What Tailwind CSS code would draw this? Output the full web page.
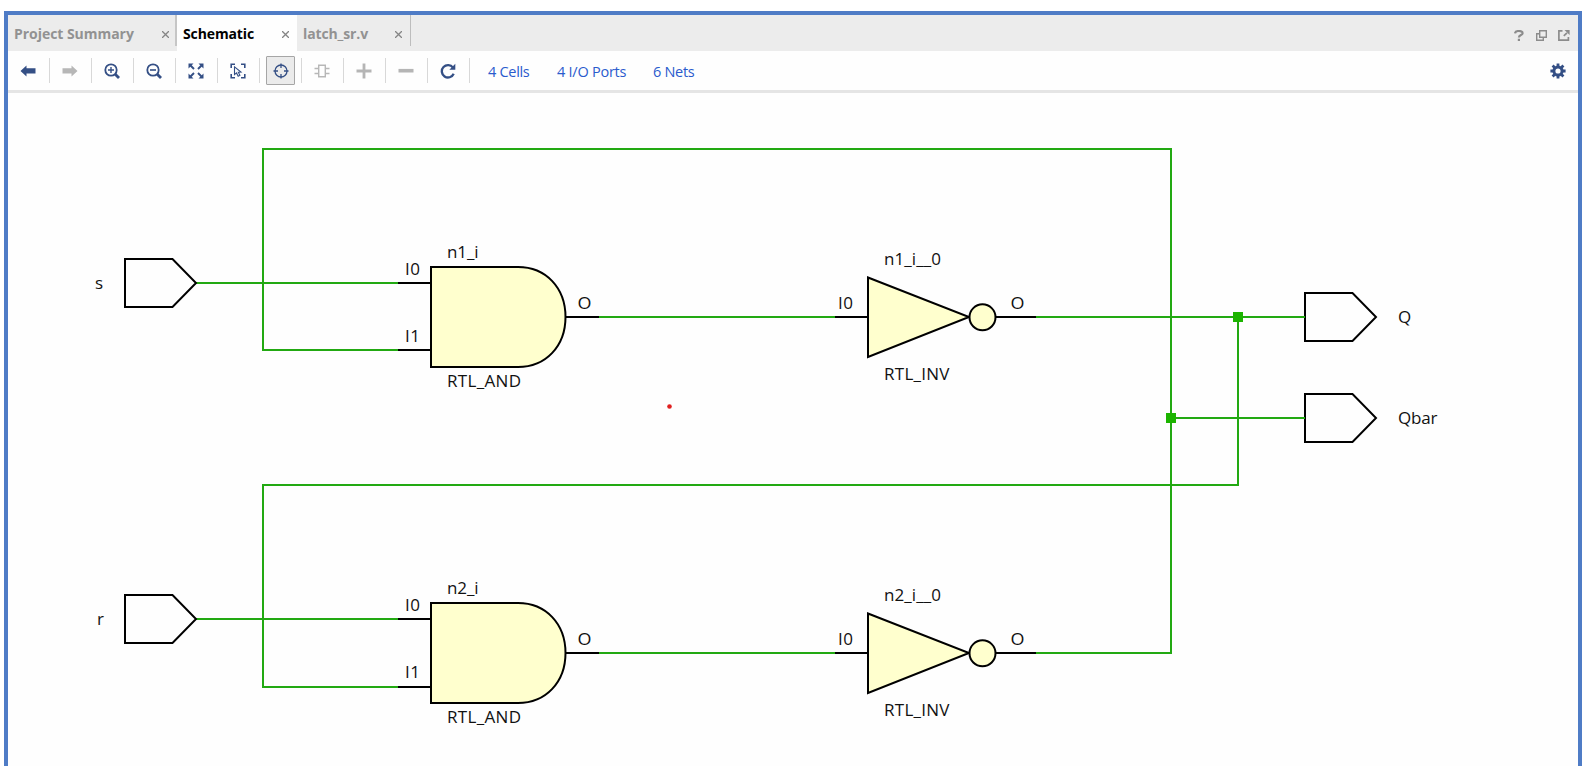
<!DOCTYPE html>
<html lang="en">
<head>
<meta charset="utf-8">
<title>Schematic</title>
<script src="https://cdn.jsdelivr.net/npm/@tailwindcss/browser@4"></script>
</head>
<body class="bg-white h-[766px] overflow-hidden pt-[11px] pl-1 font-['Open_Sans','Noto_Sans',sans-serif]">
<main class="w-[1578px] h-[760px] border-4 border-[#4f7cc6] flex flex-col bg-[#fefefe]">
  <header class="h-9 shrink-0 bg-[#ececec] flex text-[14px] font-bold leading-9 text-[#929292] whitespace-nowrap">
    <div class="w-[169px] flex items-center justify-between pl-1.5 relative">
      <span class="tracking-[-0.04px] pt-0.5">Project Summary</span>
      <svg class="w-[7px] h-[7px] mr-[8px] mt-0.5" viewBox="0 0 7 7" fill="none" stroke="#858585" stroke-width="1.3"><path d="M0 0L7 7M7 0L0 7"/></svg>
      <i class="absolute right-0 top-0 w-0.5 h-[31px] bg-[#c6c6c6]"></i>
    </div>
    <div class="w-[120px] bg-[#fefefe] text-black flex items-center justify-between pl-1.5">
      <span class="tracking-[-0.12px] pt-0.5">Schematic</span>
      <svg class="w-[7px] h-[7px] mr-[8px] mt-0.5" viewBox="0 0 7 7" fill="none" stroke="#858585" stroke-width="1.3"><path d="M0 0L7 7M7 0L0 7"/></svg>
    </div>
    <div class="w-[114px] flex items-center justify-between pl-1.5 relative">
      <span class="tracking-[-0.12px] pt-0.5">latch_sr.v</span>
      <svg class="w-[7px] h-[7px] mr-[9px] mt-0.5" viewBox="0 0 7 7" fill="none" stroke="#858585" stroke-width="1.3"><path d="M0 0L7 7M7 0L0 7"/></svg>
      <i class="absolute right-0 top-0 w-px h-[31px] bg-[#bdbdbd]"></i>
    </div>
    <div class="ml-auto flex items-center gap-[11px] pr-[8px] pt-[5px]">
      <svg class="w-[10px] h-[11px]" viewBox="0 0 10 11" fill="none" stroke="#8c8c8c" stroke-width="2.2"><path d="M1 3.4C1.2 .3 8.6 .2 8.6 3.2C8.6 5.4 4.9 4.8 4.9 7.6M4.9 8.800V11"/></svg>
      <svg class="w-[11px] h-[11px] ml-px" viewBox="0 0 11 11" fill="none" stroke="#8c8c8c" stroke-width="1.4"><path d="M3.7 .7H10.3V7.3H3.7ZM3.7 3.7H.7V10.3H7.3V7.3"/></svg>
      <svg class="w-[12px] h-[11px]" viewBox="0 0 12 11" fill="none" stroke="#8c8c8c" stroke-width="1.700"><path d="M4.5 .9H.9V10.1H10.4V7M5.8 5.9L9 2.8"/><path d="M6.5 0H11.6V5.1Z" fill="#8c8c8c" stroke="none"/></svg>
    </div>
  </header>
  <nav class="h-[42px] shrink-0 border-b-[3px] border-[#e5e5e5] flex items-center text-[14.5px] text-[#2a5bcd] whitespace-nowrap">
    <div class="w-[42px] h-[25px] border-r border-[#d8d8d8] flex items-center justify-center pr-px">
      <svg class="w-4 h-4" viewBox="0 0 16 16"><path d="M.5 8L6.5 2.500V5.200H15.5V10.500H6.5V13.500Z" fill="#344f85"/></svg>
    </div>
    <div class="w-[42px] h-[25px] border-r border-[#d8d8d8] flex items-center justify-center pr-px">
      <svg class="w-4 h-4" viewBox="0 0 16 16"><path d="M15.5 8L9.5 2.500V5.200H.5V10.500H9.5V13.500Z" fill="#b7b7b7"/></svg>
    </div>
    <div class="w-[42px] h-[25px] border-r border-[#d8d8d8] flex items-center justify-center pr-px">
      <svg class="w-4 h-4" viewBox="0 0 16 16" fill="none" stroke="#344f85"><circle cx="7" cy="7" r="5.7" stroke-width="1.8"/><path d="M4 7H10M7 4V10" stroke-width="1.4"/><path d="M11 11L15 15" stroke-width="2.8"/></svg>
    </div>
    <div class="w-[42px] h-[25px] border-r border-[#d8d8d8] flex items-center justify-center pr-px">
      <svg class="w-4 h-4" viewBox="0 0 16 16" fill="none" stroke="#344f85"><circle cx="7" cy="7" r="5.7" stroke-width="1.8"/><path d="M4 7H10" stroke-width="1.6"/><path d="M11 11L15 15" stroke-width="2.8"/></svg>
    </div>
    <div class="w-[42px] h-[25px] border-r border-[#d8d8d8] flex items-center justify-center pr-px">
      <svg class="w-4 h-4" viewBox="0 0 16 16" fill="#344f85"><path d="M.5 .5H5.5L.5 5.5ZM15.5 .5V5.5L10.5 .5ZM.5 15.5V10.5L5.5 15.5ZM15.5 15.5H10.5L15.5 10.5Z"/><path d="M2 2L6 6M14 2L10 6M2 14L6 10M14 14L10 10" stroke="#344f85" stroke-width="1.900"/></svg>
    </div>
    <div class="w-[42px] h-[25px] border-r border-[#d8d8d8] flex items-center justify-center pr-px">
      <svg class="w-4 h-4" viewBox="0 0 16 16" fill="none" stroke="#344f85"><path d="M5 1.2H1.2V5M11 1.2H14.8V5M5 14.8H1.2V11M11 14.8H14.8V11" stroke-width="1.6"/><path d="M4.5 3.8V11.6L6.5 9.9L8.2 13.2L9.9 12.3L8.3 9.2L11 9Z" stroke-width="1.1"/></svg>
    </div>
    <div class="w-[42px] h-[25px] border-r border-[#d8d8d8] flex items-center justify-center">
      <div class="w-[29px] h-[29px] shrink-0 border border-[#a6a6a6] bg-[#ebebeb] rounded-[1px] flex items-center justify-center">
        <svg class="w-4 h-4" viewBox="0 0 16 16" fill="none" stroke="#344f85" stroke-width="1.3"><circle cx="8" cy="8" r="6"/><path d="M8 .5V5M8 11V15.5M.5 8H5M11 8H15.5"/></svg>
      </div>
    </div>
    <div class="w-[42px] h-[25px] border-r border-[#d8d8d8] flex items-center justify-center pr-px">
      <svg class="w-4 h-4" viewBox="0 0 16 16" fill="none" stroke="#b7b7b7" stroke-width="1.4"><path d="M4.7 2.2H11.3V13.8H4.7ZM.5 5.5H4.7M.5 10.5H4.7M11.3 5.5H15.5M11.3 10.5H15.5"/></svg>
    </div>
    <div class="w-[42px] h-[25px] border-r border-[#d8d8d8] flex items-center justify-center pr-px">
      <svg class="w-4 h-4" viewBox="0 0 16 16"><path d="M8 .5V15.5M.5 8H15.5" stroke="#b5b5b5" stroke-width="2.8"/></svg>
    </div>
    <div class="w-[42px] h-[25px] border-r border-[#d8d8d8] flex items-center justify-center pr-px">
      <svg class="w-4 h-4" viewBox="0 0 16 16"><path d="M.5 7.700H15.5" stroke="#b5b5b5" stroke-width="3.600"/></svg>
    </div>
    <div class="w-[42px] h-[25px] border-r border-[#d8d8d8] flex items-center justify-center pr-px">
      <svg class="w-4 h-4" viewBox="0 0 16 16"><path d="M13 4.6A6.200 6.200 0 1 0 13.7 10.8" fill="none" stroke="#344f85" stroke-width="2.3"/><path d="M15.3 .8V6.8H9.3Z" fill="#344f85"/></svg>
    </div>
    <span class="ml-[18px] w-[69px] pt-0.5 tracking-[-0.3px]">4 Cells</span>
    <span class="w-[96px] pt-0.5 tracking-[-0.25px]">4 I/O Ports</span>
    <span class="pt-0.5 tracking-[-0.3px]">6 Nets</span>
    <svg class="w-4 h-4 ml-auto mr-[12px]" viewBox="0 0 16 16" fill="none" stroke="#344f85"><circle cx="8" cy="8" r="4.1" stroke-width="3"/><path d="M8 .4V3M8 13V15.6M.4 8H3M13 8H15.6M2.6 2.6L4.5 4.5M11.5 11.5L13.4 13.4M2.6 13.4L4.5 11.5M11.5 4.5L13.4 2.6" stroke-width="2.8"/></svg>
  </nav>
  <svg class="w-[1570px] h-[673px] shrink-0" viewBox="8 93 1570 673" fill="none" stroke-width="2">
    <defs>
      <g id="and">
        <path d="M431 267H518C546 267 565.500 288 565.500 317S546 367 518 367H431Z" fill="#ffffce"/>
        <path d="M398 283H431M566 317H599"/>
      </g>
      <g id="inv">
        <path d="M868 277.500L969 317L868 357Z" fill="#ffffce"/>
        <circle cx="982.500" cy="317.300" r="13" fill="#ffffce"/>
        <path d="M835 317H868M996 317H1036"/>
      </g>
      <path id="port" d="M0 -24H47.500L71 0L47.500 24H0Z" fill="#fefefe"/>
    </defs>
    <g stroke="#22a912">
      <path d="M196 283H398M398 350H263V149H1171V653H1036M599 317H835M1036 317H1305M1171 418H1305"/>
      <path d="M1238 317V485H263V687H398M196 619H398M599 653H835"/>
    </g>
    <path d="M1233 312h10v10h-10zM1166 413h10v10h-10z" fill="#1cb400"/>
    <g stroke="#000">
      <use href="#and"/><use href="#and" y="336"/>
      <path d="M398 350H431M398 687H431"/>
      <use href="#inv"/><use href="#inv" y="336"/>
      <use href="#port" x="125" y="283"/><use href="#port" x="125" y="619"/>
      <use href="#port" x="1305" y="317"/><use href="#port" x="1305" y="418"/>
    </g>
    <path d="M1304 317h1M1304 418h1" stroke="#22a912"/>
    <circle cx="669.500" cy="406.500" r="2.300" fill="#e02020"/>
    <g fill="#111" font-size="17">
      <text x="95" y="289">s</text>
      <text x="97" y="625">r</text>
      <text x="1398" y="323">Q</text>
      <text x="1398" y="424" textLength="39.500">Qbar</text>

      <text x="447" y="258" textLength="31.500">n1_i</text>
      <text x="405" y="275" textLength="15">I0</text>
      <text x="405" y="342" textLength="15">I1</text>
      <text x="577.500" y="309" textLength="14" lengthAdjust="spacingAndGlyphs">O</text>
      <text x="447" y="387" textLength="74">RTL_AND</text>
      <text x="884" y="265" textLength="57">n1_i__0</text>
      <text x="838" y="309" textLength="15">I0</text>
      <text x="1010.500" y="309" textLength="14" lengthAdjust="spacingAndGlyphs">O</text>
      <text x="884" y="380" textLength="65.500">RTL_INV</text>

      <text x="447" y="594" textLength="31.500">n2_i</text>
      <text x="405" y="611" textLength="15">I0</text>
      <text x="405" y="678" textLength="15">I1</text>
      <text x="577.500" y="645" textLength="14" lengthAdjust="spacingAndGlyphs">O</text>
      <text x="447" y="723" textLength="74">RTL_AND</text>
      <text x="884" y="601" textLength="57">n2_i__0</text>
      <text x="838" y="645" textLength="15">I0</text>
      <text x="1010.500" y="645" textLength="14" lengthAdjust="spacingAndGlyphs">O</text>
      <text x="884" y="716" textLength="65.500">RTL_INV</text>
    </g>
  </svg>
</main>
</body>
</html>
